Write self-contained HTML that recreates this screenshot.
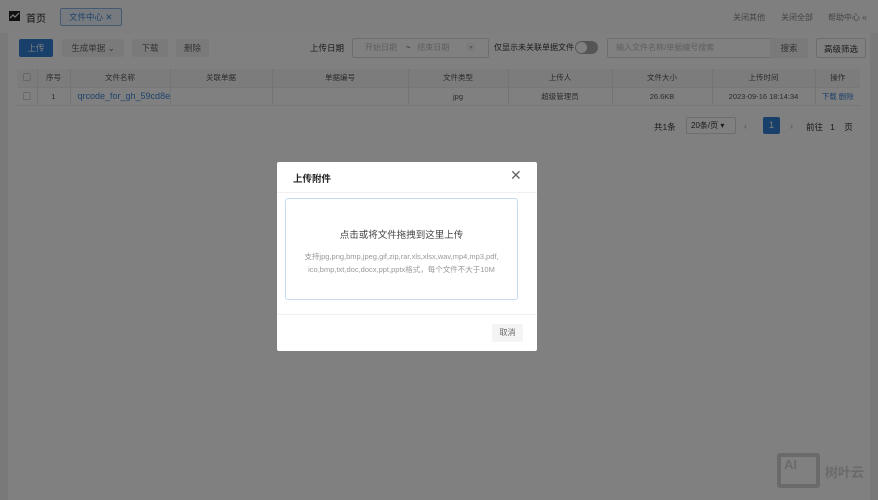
<!DOCTYPE html>
<html><head><meta charset="utf-8"><style>
*{margin:0;padding:0;box-sizing:border-box}
body{width:878px;height:500px;overflow:hidden;font-family:"Liberation Sans","Noto Sans CJK SC",sans-serif;background:#797979;position:relative;font-size:9px;color:#1a1a1a}
.hdr{position:absolute;left:0;top:0;width:878px;height:33px;background:#7f7f7f}
.card{position:absolute;left:8px;top:33px;width:862px;height:467px;background:#808080}
.abs{position:absolute;white-space:nowrap}
.btn{position:absolute;height:18px;line-height:18px;text-align:center;font-size:8.5px;border-radius:2px;background:#7a7a7a;color:#333}
table{position:absolute;left:17px;top:69px;border-collapse:collapse;font-size:7.5px;color:#2b2b2b;table-layout:fixed;width:843px}
td{height:18px;text-align:center;border-right:1px solid #747474;border-bottom:1px solid #777;overflow:hidden;white-space:nowrap}
tr.h td{background:#7c7c7c}
.dlg{position:absolute;left:277px;top:162px;width:260px;height:189px;background:#fff;border-radius:2px}
.dlg .btn{background:#f4f4f5;color:#666}
</style></head><body>
<div class="hdr">
 <svg class="abs" style="left:9px;top:11px" width="11" height="10"><rect width="11" height="10" fill="#111"/><path d="M1 7L4 4L6 6L10 2" stroke="#808080" stroke-width="1.2" fill="none"/></svg>
 <div class="abs" style="left:26px;top:10px;font-size:10px;color:#111">首页</div>
 <div class="abs" style="left:60px;top:8px;width:62px;height:18px;border:1px solid #455a70;background:#777b7f;border-radius:2px;color:#1d426b;font-size:8.5px;line-height:16px;padding-left:8px">文件中心 ✕</div>
 <div class="abs" style="left:733px;top:12px;color:#444;font-size:8px">关闭其他</div>
 <div class="abs" style="left:781px;top:12px;color:#444;font-size:8px">关闭全部</div>
 <div class="abs" style="left:828px;top:12px;color:#444;font-size:8px">帮助中心 «</div>
</div>
<div class="card"></div>
<div class="btn" style="left:19px;top:39px;width:34px;background:#18406b;color:#808080">上传</div>
<div class="btn" style="left:62px;top:39px;width:62px">生成单据 ⌄</div>
<div class="btn" style="left:132px;top:39px;width:36px">下载</div>
<div class="btn" style="left:176px;top:39px;width:33px">删除</div>
<div class="abs" style="left:310px;top:42px;font-size:8.5px">上传日期</div>
<div class="abs" style="left:352px;top:38px;width:137px;height:20px;border:1px solid #6e6e6e;border-radius:2px;color:#5e5e5e;font-size:8px;line-height:18px;padding-left:12px">开始日期 &nbsp;&nbsp; <span style="color:#1a1a1a">~</span> &nbsp; 结束日期 &nbsp;&nbsp;&nbsp;&nbsp;&nbsp;&nbsp; ▣</div>
<div class="abs" style="left:494px;top:42px;font-size:8px">仅显示未关联单据文件</div>
<div class="abs" style="left:575px;top:41px;width:23px;height:13px;border-radius:7px;background:#555"><div style="position:absolute;left:1px;top:1px;width:11px;height:11px;border-radius:50%;background:#808080"></div></div>
<div class="abs" style="left:607px;top:38px;width:201px;height:20px;border:1px solid #6e6e6e;border-radius:2px;color:#5e5e5e;font-size:8px;line-height:18px;padding-left:8px">输入文件名称/单据编号搜索</div>
<div class="btn" style="left:770px;top:38px;width:38px;height:20px;line-height:20px">搜索</div>
<div class="btn" style="left:816px;top:38px;width:50px;height:20px;line-height:20px;background:#808080;border:1px solid #6e6e6e;color:#1a1a1a">高级筛选</div>
<table>
<tr class="h"><td style="width:20px">▢</td><td style="width:33px">序号</td><td style="width:100px">文件名称</td><td style="width:102px">关联单据</td><td style="width:136px">单据编号</td><td style="width:100px">文件类型</td><td style="width:104px">上传人</td><td style="width:100px">文件大小</td><td style="width:103px">上传时间</td><td style="width:45px;border-right:none">操作</td></tr>
<tr><td>▢</td><td>1</td><td style="color:#1d426b;font-size:9px;text-align:left;padding-left:7px">qrcode_for_gh_59cd8e</td><td></td><td></td><td>jpg</td><td>超级管理员</td><td>26.6KB</td><td>2023-09-16 18:14:34</td><td style="color:#1d426b;border-right:none">下载 删除</td></tr>
</table>
<div class="abs" style="left:654px;top:121px;font-size:8.5px">共1条</div>
<div class="abs" style="left:686px;top:117px;width:50px;height:17px;border:1px solid #6e6e6e;border-radius:2px;font-size:8px;line-height:15px;padding-left:4px">20条/页 ▾</div>
<div class="abs" style="left:744px;top:121px;color:#555">‹</div>
<div class="abs" style="left:763px;top:117px;width:17px;height:17px;background:#18406b;color:#808080;text-align:center;line-height:17px;border-radius:2px">1</div>
<div class="abs" style="left:790px;top:121px;color:#555">›</div>
<div class="abs" style="left:806px;top:121px;font-size:8.5px">前往 &nbsp; 1 &nbsp;&nbsp; 页</div>
<div class="abs" style="left:777px;top:453px;width:43px;height:35px;border:4px solid #6a6a6a;border-radius:3px;color:#6a6a6a;font-weight:bold;font-size:13px;padding-left:3px">AI</div>
<div class="abs" style="left:825px;top:462px;color:#6a6a6a;font-size:13px;font-weight:bold">树叶云</div>
<div class="dlg">
 <div class="abs" style="left:16px;top:9px;font-size:9.5px;font-weight:bold;color:#222">上传附件</div>
 <div class="abs" style="left:233px;top:5px;font-size:14px;color:#666">✕</div>
 <div class="abs" style="left:0;top:30px;width:260px;border-top:1px solid #f0f0f0"></div>
 <div class="abs" style="left:8px;top:36px;width:233px;height:102px;border:1px solid #c5dbf2;border-radius:3px;text-align:center">
  <div style="margin-top:28px;font-size:9.5px;color:#444">点击或将文件拖拽到这里上传</div>
  <div style="margin-top:9px;font-size:7.5px;color:#999;line-height:13px">支持jpg,png,bmp,jpeg,gif,zip,rar,xls,xlsx,wav,mp4,mp3,pdf,<br>ico,bmp,txt,doc,docx,ppt,pptx格式，每个文件不大于10M</div>
 </div>
 <div class="abs" style="left:0;top:152px;width:260px;border-top:1px solid #f0f0f0"></div>
 <div class="btn" style="left:215px;top:162px;width:31px;height:18px;font-size:8px">取消</div>
</div>
</body></html>
